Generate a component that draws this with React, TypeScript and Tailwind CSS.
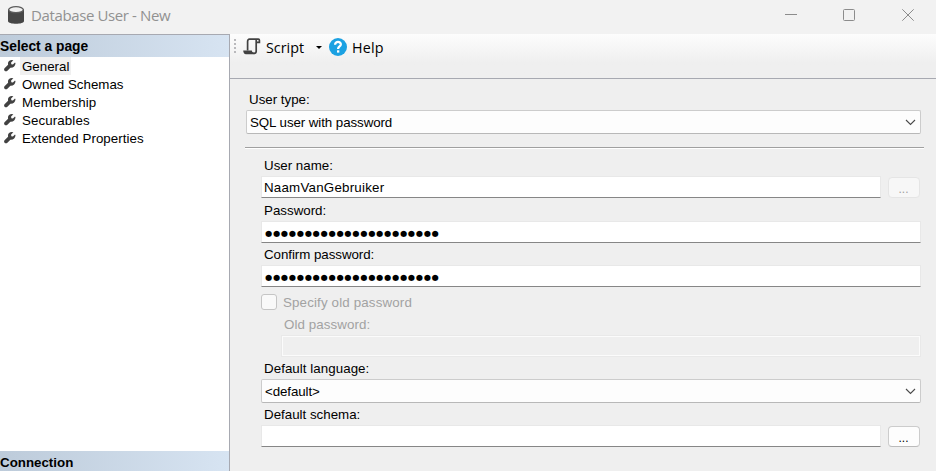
import React from "react";

const pages = [
  { name: "General", tracking: "tracking-[0px]" },
  { name: "Owned Schemas", tracking: "tracking-[0px]" },
  { name: "Membership", tracking: "tracking-[0.1px]" },
  { name: "Securables", tracking: "tracking-[0.1px]" },
  { name: "Extended Properties", tracking: "tracking-[0.05px]" },
];

function Wrench() {
  return (
    <svg width="12" height="12" viewBox="0 0 12 12" className="mb-px shrink-0">
      <path
        d="M9.4 0.2 L7.2 0 C4.8 0.4 3.6 2.2 4.1 4.7 L0.5 8.2 C-0.2 9.3 0 10.4 0.8 11 C1.6 11.6 2.7 11.4 3.4 10.7 L6.4 7.8 C9.4 8 11.4 6 11.5 3.2 L11 2.4 L8.9 4.5 L7.3 4.2 L7.1 2.6 Z"
        fill="#424242"
      />
    </svg>
  );
}

function Chevron() {
  return (
    <svg width="11" height="7" viewBox="0 0 11 7" fill="none" className="mr-[4px]">
      <path d="M1 1 L5.5 5.5 L10 1" stroke="#4a4a4a" strokeWidth="1.1" />
    </svg>
  );
}

function Label({ children, className = "" }: { children: React.ReactNode; className?: string }) {
  return <div className={`flex h-[21px] items-center ${className}`}>{children}</div>;
}

function Combo({ children, className = "" }: { children: React.ReactNode; className?: string }) {
  return (
    <div
      className={`flex h-6 items-center justify-between rounded-[2px] border border-[#cccccc] border-b-[#b8b8b8] bg-[#fdfdfd] ${className}`}
    >
      <span className="pt-px">{children}</span>
      <Chevron />
    </div>
  );
}

function Field({ children, className = "" }: { children?: React.ReactNode; className?: string }) {
  return (
    <div
      className={`flex h-[22px] items-center border border-[#e8e8e8] border-b-[#868686] bg-white pl-[2px] ${className}`}
    >
      {children}
    </div>
  );
}

function Dots() {
  return (
    <span className="pl-px pt-px font-['DejaVu_Sans',sans-serif] text-[8.2px] tracking-[0.79px]">
      {"●".repeat(22)}
    </span>
  );
}

export default function App() {
  return (
    <div className="flex h-[471px] w-[936px] flex-col overflow-hidden bg-[#f2f2f2] font-['Liberation_Sans',Arial,sans-serif] text-[13.33px] leading-[18px] text-black">
      <header className="flex h-[34px] shrink-0 items-center justify-between text-[#919191]">
        <div className="flex items-center pl-[8px]">
          <svg width="16" height="18" viewBox="0 0 16 18" className="mb-[4px]">
            <path d="M0 3.2 V15 C0 18.7 16 18.7 16 15 V3.2Z" fill="#464646" />
            <ellipse cx="8" cy="3.7" rx="7.3" ry="3" fill="#f0f0f0" stroke="#5c5c5c" strokeWidth="1.3" />
          </svg>
          <span className="ml-[7px] pb-[4px] font-['Open_Sans','Noto_Sans',sans-serif] text-[15px] tracking-[-0.38px]">Database User - New</span>
        </div>
        <svg width="131" height="14" viewBox="0 0 131 14" fill="none" stroke="#8c8c8c" className="mb-[4px] mr-[21px]">
          <path d="M1 6.5 H13" />
          <rect x="59.5" y="1.5" width="11" height="11" rx="1" />
          <path d="M118.3 1.3 L129.7 12.7 M129.7 1.3 L118.3 12.7" />
        </svg>
      </header>
      <div className="flex min-h-0 flex-1">
        <aside className="flex w-[230px] shrink-0 flex-col border-r border-t border-[#a7a9b1] bg-white">
          <h2 className="h-[22px] bg-linear-to-r from-[#bdcbda] to-[#d7e4f2] pt-[3px] text-[13.8px] font-bold">Select a page</h2>
          <nav className="flex-1">
            {pages.map((p, i) => (
              <div key={p.name} className="flex h-[18px] items-center pl-[4px]">
                <Wrench />
                <span className={`ml-[4px] h-[18px] px-[2px] pt-px ${p.tracking} ${i === 0 ? "bg-[#f0f0f0]" : ""}`}>{p.name}</span>
              </div>
            ))}
          </nav>
          <h2 className="h-5 bg-linear-to-r from-[#bdcbda] to-[#d7e4f2] pt-[3px] text-[13.33px] font-bold">Connection</h2>
        </aside>
        <main className="flex flex-1 flex-col bg-[#efefef]">
          <div className="flex h-[45px] shrink-0 items-start border-b border-[#a7a9b1] bg-linear-to-b from-[#fdfdfd] to-[#efefef] to-65% font-['Open_Sans','Noto_Sans',sans-serif] text-[14.3px]">
            <svg width="2" height="14" viewBox="0 0 2 14" className="ml-[4px] mt-[5px]" fill="#b9b9bc">
              <path d="M0 0h2v2H0zM0 4h2v2H0zM0 8h2v2H0zM0 12h2v2H0z" />
            </svg>
            <svg width="18" height="17" viewBox="0 0 18 17" className="ml-[7px] mt-[4px]">
              <path d="M4.6 12.5 V3.4 Q4.6 1.2 6.6 1.2 H15.4 Q16.4 1.2 16.4 2.2 V4.4 H13.6" fill="none" stroke="#424242" strokeWidth="1.7" />
              <path d="M13.2 1.6 V13.3 Q13.2 15.4 10.8 15.4" fill="none" stroke="#424242" strokeWidth="1.7" />
              <path d="M0.2 12.4 H8.8 Q8.8 14.4 11 14.4 V16.3 H3 Q0.4 16 0.2 12.4Z" fill="#424242" />
            </svg>
            <span className="ml-[5px] mt-[5px] w-[38px]">Script</span>
            <svg width="6" height="3" viewBox="0 0 6 3" className="ml-[12px] mt-[12px]">
              <path d="M0 0 H6 L3 3Z" />
            </svg>
            <svg width="18" height="18" viewBox="0 0 18 18" className="ml-[7px] mt-[4px]">
              <circle cx="9" cy="9" r="9" fill="#1ba1e2" />
              <path d="M6.1 6.7 C6.1 2.8 12.1 3 11.8 6.7 C11.6 8.5 9.1 8.5 9.1 10.9" fill="none" stroke="white" strokeWidth="2.3" />
              <rect x="8" y="12.3" width="2.3" height="2.3" fill="white" />
            </svg>
            <span className="ml-[5px] mt-[5px] tracking-[0.2px]">Help</span>
          </div>
          <div className="flex flex-col pl-[15px] pr-[12px] pt-[10px]">
            <Label className="ml-[4px]">User type:</Label>
            <Combo className="ml-px mr-[3px] pl-[3px] tracking-[-0.08px]">SQL user with password</Combo>
            <div className="mt-[13px] h-[2px] border-b border-t border-b-white border-t-[#a0a0a0]" />
            <div className="ml-[16px] mr-[3px] mt-[6px] flex flex-col">
              <Label className="ml-[3px]">User name:</Label>
              <div className="flex items-end gap-[7px]">
                <Field className="w-[620px]"><span className="pt-px tracking-[0.22px]">NaamVanGebruiker</span></Field>
                <div className="flex h-[21px] w-[32px] justify-center rounded-[4px] border border-[#e5e5e5] bg-[#f7f7f7] pr-px pt-[2px] text-[12px] text-[#a0a0a0]">...</div>
              </div>
              <Label className="ml-[3px] mt-[2px]">Password:</Label>
              <Field><Dots /></Field>
              <Label className="ml-[3px] mt-px tracking-[-0.05px]">Confirm password:</Label>
              <Field><Dots /></Field>
              <div className="mt-[7px] flex h-4 items-center text-[#a2a2a2]">
                <span className="h-4 w-4 rounded-[3px] border border-[#c5c5c5] bg-[#f9f9f9]" />
                <span className="ml-[6px] pt-px tracking-[0.15px]">Specify old password</span>
              </div>
              <Label className="ml-[23px] mt-1 tracking-[0.08px] text-[#a2a2a2]">Old password:</Label>
              <div className="ml-[20px] h-[22px] border border-[#e9e9e9]">
                <div className="h-full border border-[#fbfbfb]" />
              </div>
              <Label className="ml-[3px] mt-px tracking-[0.05px]">Default language:</Label>
              <Combo className="pl-[3px] tracking-[-0.1px]">&lt;default&gt;</Combo>
              <Label className="ml-[3px] mt-px">Default schema:</Label>
              <div className="flex items-end gap-[7px]">
                <Field className="w-[620px]" />
                <div className="flex h-[21px] w-[32px] justify-center rounded-[4px] border border-[#cccccc] border-b-[#bbbbbb] bg-[#fdfdfd] pr-px pt-[2px] text-[12px]">...</div>
              </div>
            </div>
          </div>
        </main>
      </div>
    </div>
  );
}
